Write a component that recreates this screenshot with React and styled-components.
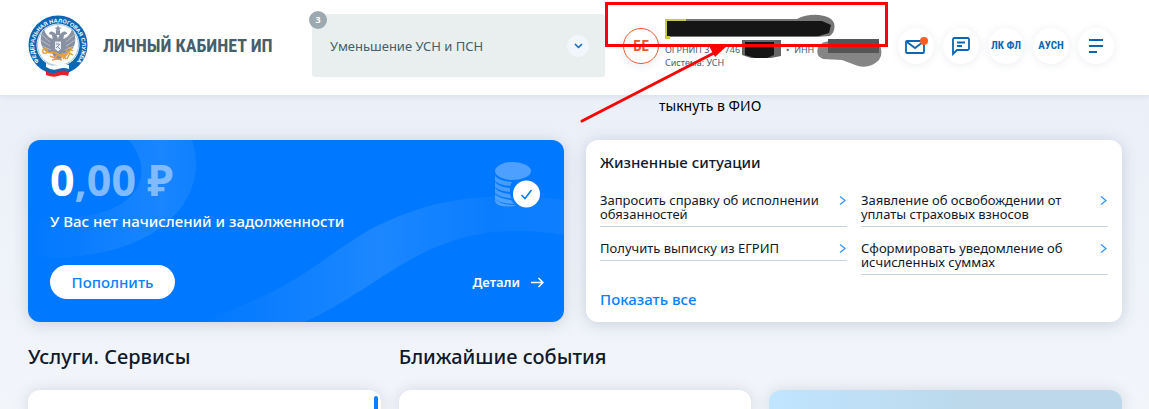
import React from "react";
import styled, { createGlobalStyle } from "styled-components";

const GlobalStyle = createGlobalStyle`
  * {
    box-sizing: border-box;
  }

  body {
    margin: 0;
    color: #0f1a2e;
    font-family: "Noto Sans", "Open Sans", sans-serif;
    background: linear-gradient(#e8eef8, #f2f5fa 400px);
  }

  button {
    padding: 0;
    border: none;
    font-family: inherit;
    cursor: pointer;
  }

  a {
    color: inherit;
    text-decoration: none;
  }

  h1, h2, p, ul {
    margin: 0;
    padding: 0;
  }
`;

const narrow = `"Liberation Sans Narrow", "Roboto Condensed", "DejaVu Sans Condensed", sans-serif`;

const Header = styled.header`
  display: flex;
  align-items: center;
  padding: 14px 35px 18px 28px;
  background: white;
  box-shadow: 0 1px 6px rgba(60, 80, 120, 0.12);
`;

const Brand = styled.a`
  display: flex;
  align-items: center;
  flex: 0 0 284px;
  gap: 15px;
  color: #455f6c;
  font-family: ${narrow};
  font-size: 18px;
  font-weight: bold;
`;

const Task = styled.button`
  position: relative;
  display: flex;
  align-items: center;
  justify-content: space-between;
  flex: 1;
  height: 63px;
  padding: 0 16px 0 18px;
  border-radius: 3px;
  background: #e9eeee;
  color: #455f6c;
  font-size: 13px;
`;

const Badge = styled.span`
  position: absolute;
  top: -3px;
  left: -3px;
  width: 18px;
  height: 18px;
  border-radius: 50%;
  background: #9da9b0;
  color: white;
  font-size: 9px;
  font-weight: bold;
  line-height: 18px;
`;

const Chevron = styled.span`
  display: flex;
  align-items: center;
  justify-content: center;
  width: 22px;
  height: 22px;
  border-radius: 50%;
  background: #f1f5fc;
`;

const User = styled.div`
  position: relative;
  display: flex;
  align-items: center;
  align-self: stretch;
  flex: 0 0 275px;
  gap: 6px;
  margin-left: 18px;
`;

const Avatar = styled.span`
  width: 36px;
  height: 36px;
  border: 1px solid #f0562a;
  border-radius: 50%;
  color: #f0562a;
  font-family: ${narrow};
  font-size: 15px;
  font-weight: bold;
  line-height: 34px;
  text-align: center;
  box-shadow: 0 2px 10px rgba(60, 80, 120, 0.1);
`;

const UserInfo = styled.div`
  padding-top: 20px;
  color: #455f6c;
  font-size: 9px;
  line-height: 13px;
  white-space: nowrap;
`;

const Hidden = styled.span`
  display: inline-block;
  width: ${(props) => props.$width}px;
`;

const Tools = styled.nav`
  display: flex;
  gap: 9px;
`;

const Tool = styled.button`
  display: flex;
  align-items: center;
  justify-content: center;
  width: 36px;
  height: 36px;
  border-radius: 50%;
  background: white;
  color: #0b66b5;
  font-family: ${narrow};
  font-size: 11px;
  font-weight: bold;
  box-shadow: 0 1px 8px rgba(60, 80, 120, 0.1);
`;

const Marks = styled.svg`
  position: absolute;
  z-index: 1;
  top: -14px;
  left: -53px;
  pointer-events: none;
`;

const Note = styled.p`
  position: absolute;
  top: 83px;
  left: 36px;
  color: black;
  font-size: 14px;
  line-height: 18px;
  white-space: nowrap;
`;

const Main = styled.main`
  padding: 45px 27px 0 28px;
`;

const Cards = styled.div`
  display: grid;
  grid-template-columns: 1fr 1fr;
  gap: 22px;
`;

const shadow = "0 2px 16px rgba(50, 65, 100, 0.2)";

const Balance = styled.section`
  position: relative;
  display: flex;
  flex-direction: column;
  justify-content: space-between;
  min-height: 182px;
  padding: 16px 20px 23px 22px;
  overflow: hidden;
  border-radius: 12px;
  background: #0078ff;
  color: white;
  box-shadow: ${shadow};
`;

const Ribbons = styled.svg`
  position: absolute;
  top: 0;
  left: 0;
  width: 100%;
  height: 100%;
`;

const Row = styled.div`
  position: relative;
  display: flex;
  align-items: ${(props) => (props.$top ? "flex-start" : "center")};
  justify-content: space-between;
`;

const CoinsIcon = styled.svg`
  margin: 6px 3px 0 0;
`;

const Amount = styled.p`
  font-size: 43px;
  font-weight: bold;
  line-height: 48px;

  span {
    color: #80bbff;
  }
`;

const Message = styled.p`
  margin-top: 7px;
  font-size: 15px;
  font-weight: 500;
  line-height: 20px;
`;

const PayButton = styled.button`
  width: 125px;
  height: 34px;
  border-radius: 17px;
  background: white;
  color: #0a80ff;
  font-size: 15px;
  font-weight: 500;
`;

const Details = styled.a`
  display: flex;
  align-items: center;
  gap: 11px;
  font-size: 13px;
  font-weight: 600;
`;

const Situations = styled.section`
  padding: 12px 14px;
  border-radius: 12px;
  background: white;
  box-shadow: ${shadow};
`;

const CardTitle = styled.h2`
  font-size: 15px;
  font-weight: 500;
  line-height: 20px;
`;

const Links = styled.ul`
  display: grid;
  grid-template-columns: 1fr 1fr;
  align-items: start;
  gap: 14px;
  margin: 21px 0 14px;
  list-style: none;
`;

const LinkItem = styled.a`
  display: flex;
  align-items: flex-start;
  justify-content: space-between;
  gap: 8px;
  padding-bottom: 5px;
  border-bottom: 1px solid #c6d3e2;
  font-size: 13px;
  line-height: 14px;

  svg {
    flex: none;
    margin: 3px 1px 0 0;
  }
`;

const ShowAll = styled.a`
  display: table;
  color: #0a80ff;
  font-size: 15px;
  font-weight: 500;
  line-height: 20px;
`;

const Sections = styled.div`
  display: grid;
  grid-template-columns: repeat(3, 1fr);
  gap: 19px 18px;
  margin-top: 21px;
`;

const Heading = styled.h2`
  grid-column: ${(props) => (props.$wide ? "span 2" : "auto")};
  font-size: 20px;
  font-weight: 500;
  line-height: 28px;
`;

const Panel = styled.div`
  display: flex;
  justify-content: flex-end;
  min-height: 19px;
  padding: 6px 3px 0;
  border-radius: 12px 12px 0 0;
  background: ${(props) => (props.$blue ? "linear-gradient(90deg, #c0e5ff, #bcd8ea 60%)" : "white")};
  box-shadow: ${shadow};
`;

const Thumb = styled.div`
  width: 4px;
  border-radius: 2px 2px 0 0;
  background: #0a80ff;
`;

const situations = [
  "Запросить справку об исполнении обязанностей",
  "Заявление об освобождении от уплаты страховых взносов",
  "Получить выписку из ЕГРИП",
  "Сформировать уведомление об исчисленных суммах",
];

const Logo = () => (
  <svg width="60" height="62" viewBox="0 0 60 62">
    <circle cx="30" cy="30" r="29.5" fill="#0b67b4" />
    <circle cx="30" cy="30" r="21.5" fill="white" />
    <circle cx="30" cy="30" r="20.5" fill="none" stroke="#0b67b4" strokeWidth="0.4" />
    <path id="ring" d="M13.5 49 A24 24 0 1 1 46.5 49" fill="none" />
    <text fill="white" fontSize="5.6" fontWeight="bold" fontFamily="Liberation Sans, sans-serif">
      <textPath href="#ring" startOffset="50%" textAnchor="middle">
        ФЕДЕРАЛЬНАЯ НАЛОГОВАЯ СЛУЖБА
      </textPath>
    </text>
    <g fill="#8791a2">
      <path d="M30 10l1 2.500 2.500.2-2 1.600.8 2.500-2.300-1.400-2.300 1.400.8-2.500-2-1.600 2.500-.2z" />
      <path d="M25 24C21 23 17 19 16 14c-3 4-4 9-3 14 1 5 4 9 8 10l6 1z" />
      <path d="M35 24c4-1 8-5 9-10 3 4 4 9 3 14-1 5-4 9-8 10l-6 1z" />
      <path d="M30 24c-1-4-2-6-5-7-2-1-4 0-4 2l3 1 1 6-1 12 3 6h6l3-6-1-12 1-6 3-1c0-2-2-3-4-2-3 1-4 3-5 7z" />
      <path d="M28 16h4v4h-4z" />
    </g>
    <path d="M14 20l8 7M13 25l9 6M14 31l9 4M46 20l-8 7M47 25l-9 6M46 31l-9 4" stroke="white" strokeWidth="0.4" />
    <path d="M26.500 26h7v8l-3.500 3-3.500-3z" fill="#e9edf3" stroke="#8791a2" />
    <path d="M28 33l4-4M28 29h3M29 31l3 3" stroke="#8791a2" />
    <g fill="none" stroke="#e5a43b" strokeWidth="1.500">
      <circle cx="17" cy="36" r="2.300" />
      <path d="M19 37c4 2 6-1 9 1s7 3 10 0M22 41l5 2 3-4 4 3 5-3M24 45l5-1 5 1M35 44l9-11M40 32l5 4M38 36l7 4M34 38l4 6M42 38l-3 6" />
    </g>
    <path d="M18 48q6 4 12 2t11 0v9q-6-1-11 1t-12 0z" fill="white" />
    <path d="M18 52q6 4 12 2t11 0v4q-6-1-11 1t-12 0z" fill="#0b67b4" />
    <path d="M18 56q6 4 12 1t11 0l-1 4q-5-2-10 0t-12-1z" fill="#ec1c2b" />
  </svg>
);

const Coins = () => (
  <CoinsIcon width="46" height="46" viewBox="0 0 46 46">
    <g fill="white">
      <ellipse cx="18" cy="9" rx="18" ry="9" opacity="0.3" />
      <g opacity="0.28">
        <path d="M0 14q4 5 17 6l-2 4q-11-1-15-5z" />
        <path d="M0 20q4 5 15 6v4q-11-1-15-5z" />
        <path d="M0 26q4 5 15 6l1 4q-12-1-16-5z" />
        <path d="M0 32q4 5 16 6l3 4q-15-1-19-5z" />
        <path d="M0 37q5 6 19 6l2 1q-21 2-21-6z" />
      </g>
      <circle cx="31.500" cy="32" r="13.500" />
    </g>
    <path d="M26.500 33l3.500 3.500L36.500 28" fill="none" stroke="#0078ff" strokeWidth="1.500" />
  </CoinsIcon>
);

const RightArrow = () => (
  <svg width="7" height="9" viewBox="0 0 7 9" fill="none" stroke="#2e93ff" strokeWidth="1.200">
    <path d="M1 .5l5 4-5 4" />
  </svg>
);

const Annotations = () => (
  <Marks width="330" height="130" viewBox="0 0 330 130">
    <path d="M95 19h132q10-5 22-4 12 1 15 8 2 8-4 13l-14 1H97z" fill="#777" />
    <path d="M95 19h21v3h-19v14h3v3h-5z" fill="#c9c94a" />
    <path d="M97 21h155l9 4-2 8-10 3H97z" fill="#151515" />
    <path d="M172 40h39v16l-10 2h-20l-9-3z" fill="#666" />
    <path d="M175 42h29v13l-7 3h-12l-10-3z" fill="#151515" />
    <path d="M248 47q4-7 17-6l44 2q5 10 0 17-9 9-21 6l-16-6-19-1q-8-3-5-12z" fill="#858585" />
    <path d="M258 39h51v14h-51z" fill="#555" />
    <g stroke="red" strokeWidth="3" fill="none">
      <path d="M36.500 3.500h280v42h-280z" />
      <path d="M12 121L146 52" strokeLinecap="round" />
    </g>
    <path d="M158 45l-13 12-6-11z" fill="red" />
  </Marks>
);

const App = () => {
  return (
    <>
      <GlobalStyle />
      <Header>
        <Brand href="#">
          <Logo />
          ЛИЧНЫЙ КАБИНЕТ ИП
        </Brand>
        <Task>
          <Badge>3</Badge>
          Уменьшение УСН и ПСН
          <Chevron>
            <svg width="9" height="6" viewBox="0 0 9 6" fill="none" stroke="#0b66b5" strokeWidth="1.500">
              <path d="M1 1l3.500 3.500L8 1" />
            </svg>
          </Chevron>
        </Task>
        <User>
          <Avatar>БЕ</Avatar>
          <UserInfo>
            <p>
              ОГРНИП 31
              <Hidden $width={10} />
              746
              <Hidden $width={46} />• &nbsp;ИНН
            </p>
            <p>Система: УСН</p>
          </UserInfo>
          <Annotations />
          <Note>тыкнуть в ФИО</Note>
        </User>
        <Tools>
          <Tool aria-label="Сообщения">
            <svg width="24" height="18" viewBox="0 0 24 18" fill="none" stroke="#0b66b5" strokeWidth="1.800">
              <rect x="2" y="4" width="18" height="12" rx="1" />
              <path d="M3 5l8 6 8-6" />
              <circle cx="20" cy="4" r="4" fill="#f55f24" stroke="none" />
            </svg>
          </Tool>
          <Tool aria-label="Чат">
            <svg width="20" height="20" viewBox="0 0 20 20" fill="none" stroke="#0b66b5" strokeWidth="1.800">
              <path d="M2 18V3.500Q2 2 3.500 2h13Q18 2 18 3.500v9q0 1.500-1.500 1.500H6z" />
              <path d="M6 6.500h8M6 10h5" />
            </svg>
          </Tool>
          <Tool>ЛК ФЛ</Tool>
          <Tool>АУСН</Tool>
          <Tool aria-label="Меню">
            <svg width="14" height="14" viewBox="0 0 14 14" fill="none" stroke="#0b66b5" strokeWidth="2">
              <path d="M0 1h14M0 7h14M0 13h8" />
            </svg>
          </Tool>
        </Tools>
      </Header>
      <Main>
        <Cards>
          <Balance>
            <Ribbons viewBox="0 0 536 182" preserveAspectRatio="none">
              <defs>
                <linearGradient id="loop">
                  <stop offset="0" stopColor="white" stopOpacity="0" />
                  <stop offset="0.800" stopColor="white" stopOpacity="0.100" />
                  <stop offset="1" stopColor="white" stopOpacity="0.060" />
                </linearGradient>
                <linearGradient id="wave">
                  <stop offset="0" stopColor="white" stopOpacity="0" />
                  <stop offset="0.500" stopColor="white" stopOpacity="0.110" />
                  <stop offset="0.800" stopColor="white" stopOpacity="0.040" />
                  <stop offset="1" stopColor="white" stopOpacity="0.050" />
                </linearGradient>
              </defs>
              <path d="M101 0C129 34 116 85 0 79v38c130 8 184-59 164-117z" fill="url(#loop)" />
              <path d="M165 182C215 168 245 152 262 142 290 126 320 101 345 88c55-28 110-38 191-28v35c-55-9-98-4-145 20-35 18-75 50-115 67z" fill="url(#wave)" />
            </Ribbons>
            <Row $top>
              <div>
                <Amount>
                  0<span>,00 ₽</span>
                </Amount>
                <Message>У Вас нет начислений и задолженности</Message>
              </div>
              <Coins />
            </Row>
            <Row>
              <PayButton>Пополнить</PayButton>
              <Details href="#">
                Детали
                <svg width="13" height="11" viewBox="0 0 13 11" fill="none" stroke="white" strokeWidth="1.500">
                  <path d="M0 5.500h12M7.500 1L12 5.500 7.500 10" />
                </svg>
              </Details>
            </Row>
          </Balance>
          <Situations>
            <CardTitle>Жизненные ситуации</CardTitle>
            <Links>
              {situations.map((title) => (
                <li key={title}>
                  <LinkItem href="#">
                    {title}
                    <RightArrow />
                  </LinkItem>
                </li>
              ))}
            </Links>
            <ShowAll href="#">Показать все</ShowAll>
          </Situations>
        </Cards>
        <Sections>
          <Heading>Услуги. Сервисы</Heading>
          <Heading $wide>Ближайшие события</Heading>
          <Panel>
            <Thumb />
          </Panel>
          <Panel />
          <Panel $blue />
        </Sections>
      </Main>
    </>
  );
};

export default App;
